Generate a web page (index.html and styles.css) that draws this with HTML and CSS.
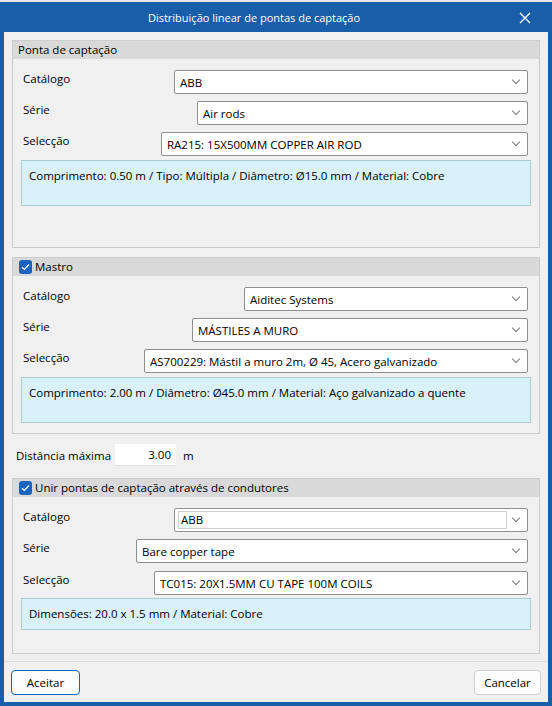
FILE: index.html
```html
<!DOCTYPE html>
<html lang="pt">
<head>
<meta charset="utf-8">
<title>Distribuição linear de pontas de captação</title>
<link rel="stylesheet" href="styles.css">
</head>
<body>
<div class="topstrip"></div>
<div class="window">
  <div class="titlebar">
    <div class="title">Distribuição linear de pontas de captação</div>
    <div class="close">
      <svg width="12" height="12" viewBox="0 0 12 12"><path d="M1 1 L11 11 M11 1 L1 11" stroke="#fff" stroke-width="1.4" fill="none"/></svg>
    </div>
  </div>
  <div class="client">
    <section class="group g1">
      <div class="group-head"><span class="head-text">Ponta de captação</span></div>
      <div class="group-body">
        <div class="row">
          <span class="label">Catálogo</span>
          <div class="combo w354"><span class="val">ABB</span><span class="chev"></span></div>
        </div>
        <div class="row">
          <span class="label">Série</span>
          <div class="combo w331"><span class="val">Air rods</span><span class="chev"></span></div>
        </div>
        <div class="row">
          <span class="label">Selecção</span>
          <div class="combo w367"><span class="val">RA215: 15X500MM COPPER AIR ROD</span><span class="chev"></span></div>
        </div>
        <div class="info tall">Comprimento: 0.50 m / Tipo: Múltipla / Diâmetro: Ø15.0 mm / Material: Cobre</div>
      </div>
    </section>

    <section class="group g2">
      <div class="group-head"><span class="check"><svg width="9" height="8" viewBox="0 0 9 8"><path d="M1 4.2 L3.4 6.4 L8 1.5" stroke="#fff" stroke-width="1.2" fill="none"/></svg></span><span class="head-text">Mastro</span></div>
      <div class="group-body">
        <div class="row">
          <span class="label">Catálogo</span>
          <div class="combo w284"><span class="val">Aiditec Systems</span><span class="chev"></span></div>
        </div>
        <div class="row">
          <span class="label">Série</span>
          <div class="combo w336"><span class="val">MÁSTILES A MURO</span><span class="chev"></span></div>
        </div>
        <div class="row">
          <span class="label">Selecção</span>
          <div class="combo w384"><span class="val">AS700229: Mástil a muro 2m, Ø 45, Acero galvanizado</span><span class="chev"></span></div>
        </div>
        <div class="info tall">Comprimento: 2.00 m / Diâmetro: Ø45.0 mm / Material: Aço galvanizado a quente</div>
      </div>
    </section>

    <div class="distrow">
      <span class="distlabel">Distância máxima</span>
      <div class="numinput">3.00</div>
      <span class="unit">m</span>
    </div>

    <section class="group g3">
      <div class="group-head"><span class="check"><svg width="9" height="8" viewBox="0 0 9 8"><path d="M1 4.2 L3.4 6.4 L8 1.5" stroke="#fff" stroke-width="1.2" fill="none"/></svg></span><span class="head-text">Unir pontas de captação através de condutores</span></div>
      <div class="group-body">
        <div class="row">
          <span class="label">Catálogo</span>
          <div class="combo w354 editable"><span class="edit">ABB</span><span class="chev"></span></div>
        </div>
        <div class="row">
          <span class="label">Série</span>
          <div class="combo w392"><span class="val">Bare copper tape</span><span class="chev"></span></div>
        </div>
        <div class="row row-last">
          <span class="label">Selecção</span>
          <div class="combo w374"><span class="val">TC015: 20X1.5MM CU TAPE 100M COILS</span><span class="chev"></span></div>
        </div>
        <div class="info short">Dimensões: 20.0 x 1.5 mm / Material: Cobre</div>
      </div>
    </section>

    <div class="footer">
      <button class="btn primary">Aceitar</button>
      <button class="btn">Cancelar</button>
    </div>
  </div>
</div>
</body>
</html>
```

FILE: styles.css
```css
* { box-sizing: border-box; }
html, body { margin: 0; padding: 0; }
body {
  width: 552px;
  height: 706px;
  overflow: hidden;
  font-family: "Open Sans", "Noto Sans", "Liberation Sans", sans-serif;
  font-size: 11.5px;
  color: #000;
  background: #195ea8;
}
.topstrip { height: 2px; background: #e9e9e9; }
.window {
  background: #195ea8;
  padding: 0 4px 4px 4px;
  height: 704px;
  display: flex;
  flex-direction: column;
}
.titlebar {
  height: 30px;
  display: flex;
  align-items: center;
  color: #fff;
}
.title {
  flex: 1;
  text-align: center;
  padding-left: 2px;
  font-size: 11px;
}
.close {
  width: 46px;
  display: flex;
  justify-content: center;
  align-items: center;
  padding-top: 2px;
}
.client {
  flex: 1;
  background: #f0f0f0;
  display: flex;
  flex-direction: column;
  padding-top: 8px;
}
.group {
  margin: 0 8px;
  border: 1px solid #cdcdcd;
  display: flex;
  flex-direction: column;
}
.g1 { height: 208px; }
.g2 { height: 177px; margin-top: 9px; }
.g3 { height: 176px; margin-top: 12px; }
.group-head {
  height: 18px;
  background: #d9d9d9;
  display: flex;
  align-items: center;
  padding-left: 5px;
}
.head-text { line-height: 18px; }
.check {
  width: 13px;
  height: 14px;
  border-radius: 3px;
  background: #1864c0;
  display: inline-flex;
  align-items: center;
  justify-content: center;
  margin-left: 1px;
  margin-right: 3px;
}
.group-body {
  padding: 11px 8px 0 8px;
  display: flex;
  flex-direction: column;
}
.row {
  display: flex;
  align-items: flex-start;
  height: 24px;
  margin-bottom: 7px;
  padding-left: 2px;
  padding-right: 3px;
}
.row-last { margin-top: 1px; }
.label { line-height: 18px; }
.combo {
  margin-left: auto;
  height: 24px;
  background: #fff;
  border: 1px solid #8f8f8f;
  border-radius: 2px;
  display: flex;
  align-items: center;
  padding-left: 5px;
  position: relative;
}
.val { flex: 1; white-space: nowrap; overflow: hidden; padding-top: 1px; }
.chev {
  width: 20px;
  height: 22px;
  flex: none;
  position: relative;
}
.chev::before {
  content: "";
  position: absolute;
  left: 6px;
  top: 6px;
  width: 5px;
  height: 5px;
  border-right: 1px solid #7a7a7a;
  border-bottom: 1px solid #7a7a7a;
  transform: rotate(45deg);
}
.editable { padding-left: 3px; }
.edit {
  flex: 1;
  height: 18px;
  border: 1px solid #cfcfcf;
  padding-left: 2px;
  line-height: 16px;
  margin-right: 0;
}
.w354 { width: 354px; }
.w331 { width: 331px; }
.w367 { width: 367px; }
.w284 { width: 284px; }
.w336 { width: 336px; }
.w384 { width: 384px; }
.w392 { width: 392px; }
.w374 { width: 374px; }
.info {
  margin-top: -3px;
  background: #d9f1f9;
  border: 1px solid #a9ccd6;
  padding: 7px 7px 0 7px;
  line-height: 16px;
}
.tall { height: 46px; }
.short { height: 32px; margin-top: -4px; }
.distrow {
  display: flex;
  align-items: center;
  margin-top: 10px;
  padding-left: 12px;
  height: 22px;
}
.distlabel { width: 99px; white-space: nowrap; }
.numinput {
  width: 61px;
  height: 22px;
  background: #fff;
  border-bottom: 1px solid #e0e0e0;
  text-align: right;
  padding-right: 5px;
  line-height: 21px;
}
.unit { margin-left: 7px; }
.footer {
  margin-top: 7px;
  border-top: 1px solid #dcdcdc;
  flex: 1;
  display: flex;
  justify-content: space-between;
  align-items: flex-start;
  padding: 8px 7px 0 7px;
}
.btn {
  font-family: inherit;
  font-size: 11.5px;
  height: 25px;
  background: #fdfdfd;
  border: 1px solid #d0d0d0;
  border-radius: 4px;
  padding: 0;
  width: 67px;
  color: #000;
}
.primary {
  width: 69px;
  border: 1px solid #0067c0;
  box-shadow: inset 0 0 0 1px #fdfdfd;
}
```
